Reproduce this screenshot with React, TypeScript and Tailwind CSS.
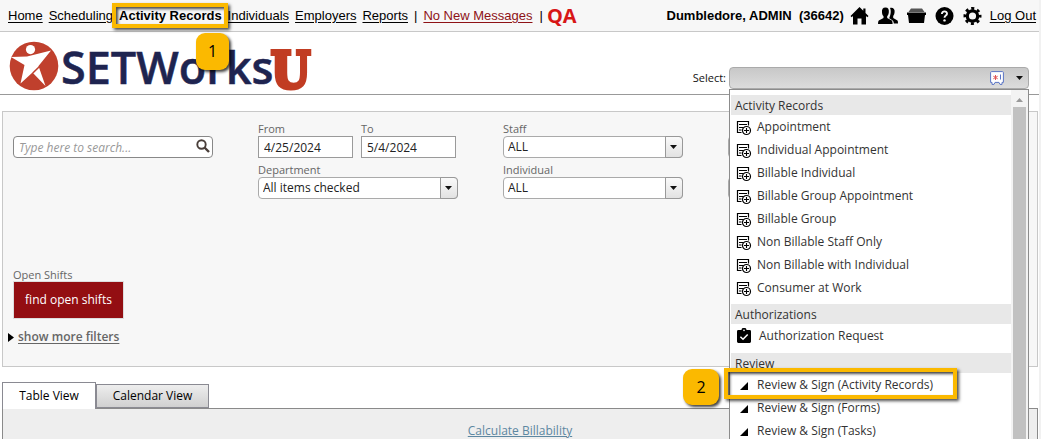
import React from "react";
import { clsx } from "clsx";

type IconKind = "note" | "clipboard" | "corner";

const NAV_BEFORE = ["Home", "Scheduling"];
const NAV_AFTER = ["Individuals", "Employers", "Reports"];

const MENU_GROUPS: { title: string; icon: IconKind; items: string[] }[] = [
  {
    title: "Activity Records",
    icon: "note",
    items: [
      "Appointment",
      "Individual Appointment",
      "Billable Individual",
      "Billable Group Appointment",
      "Billable Group",
      "Non Billable Staff Only",
      "Non Billable with Individual",
      "Consumer at Work",
    ],
  },
  { title: "Authorizations", icon: "clipboard", items: ["Authorization Request"] },
  {
    title: "Review",
    icon: "corner",
    items: ["Review & Sign (Activity Records)", "Review & Sign (Forms)", "Review & Sign (Tasks)"],
  },
];

const MenuIcon = ({ kind }: { kind: IconKind }) => {
  if (kind === "note") {
    return (
      <svg width="16" height="16" viewBox="0 0 16 16" fill="none" stroke="#000" className="mt-0.5 ml-[5px] mr-[5px] shrink-0">
        <path d="M5.5 12.5H1.5V1.5H12.5V5.5" strokeWidth="1.2" />
        <path d="M3 4.5H11M3 7.5H8M3 10H5.5" strokeWidth="1.1" />
        <circle cx="10.5" cy="10.5" r="4" fill="#fff" strokeWidth="1.2" />
        <path d="M8 10.5H13M10.5 8V13" strokeWidth="1.1" />
      </svg>
    );
  }
  if (kind === "clipboard") {
    return (
      <svg width="14" height="16" viewBox="0 0 14 16" className="ml-1.5 mr-2 shrink-0">
        <path d="M1.5 2H4.5A2.5 2.2 0 0 1 9.5 2H12.5A1.4 1.4 0 0 1 14 3.4V13.6A1.4 1.4 0 0 1 12.5 15H1.5A1.4 1.4 0 0 1 0 13.6V3.4A1.4 1.4 0 0 1 1.5 2Z" fill="#000" />
        <circle cx="7" cy="2.4" r=".8" fill="#fff" />
        <path d="M3.4 8.8L6 11.3L10.7 6.4" fill="none" stroke="#fff" strokeWidth="1.5" />
      </svg>
    );
  }
  return (
    <svg width="8" height="8" viewBox="0 0 8 8" className="mt-0.5 ml-[9px] mr-[9px] shrink-0">
      <path d="M8 0V8H0Z" fill="#000" />
    </svg>
  );
};

const Caret = () => (
  <svg width="7" height="4" viewBox="0 0 7 4" className="shrink-0">
    <path d="M0 0H7L3.5 4Z" fill="#111" />
  </svg>
);

const Badge = ({ children, className }: { children: React.ReactNode; className?: string }) => (
  <span
    className={clsx(
      "absolute z-20 flex items-center justify-center rounded-[9px] bg-[#fbb900] font-['Open_Sans',sans-serif] text-base font-normal text-black shadow-[2px_2px_3px_rgba(0,0,0,0.75)]",
      className
    )}
  >
    {children}
  </span>
);

const Highlight = ({ className }: { className?: string }) => (
  <span
    className={clsx(
      "pointer-events-none absolute z-10 border-4 border-[#fbb900] shadow-[2px_2px_3px_rgba(0,0,0,0.7),inset_2px_2px_3px_rgba(0,0,0,0.7)]",
      className
    )}
  />
);

const Logo = () => (
  <svg width="300" height="52" viewBox="0 0 300 52" role="img" aria-label="SETWorksU" className="shrink-0 overflow-visible">
    <circle cx="24" cy="25" r="24.3" fill="#c0402d" />
    <circle cx="20.5" cy="8.6" r="4.6" fill="#fff" />
    <path d="M1 16L17 15.5L41 9.5L28.5 25L35.5 45L22.5 31.5L10.5 42.5L14.5 24Z" fill="#fff" />
    <path d="M22.8 32L29.5 25.5" stroke="#c0402d" strokeWidth="1.6" />
    <text x="51" y="43" fontFamily="Open Sans, sans-serif" fontSize="45" fontWeight="600" fill="#1e2450" stroke="#1e2450" strokeWidth=".5">
      SETWorks
    </text>
    <text x="261" y="47" fontFamily="DejaVu Serif Condensed, DejaVu Serif, serif" fontSize="50" fontWeight="700" fontStretch="condensed" fill="#c13c22" stroke="#c13c22" strokeWidth="4">
      U
    </text>
  </svg>
);

const HeaderIcons = () => (
  <div className="flex items-center gap-[9px]">
    <button aria-label="Dashboard">
      <svg width="19" height="18" viewBox="0 0 18 18"><path d="M9 0L12.8 3.7V1.5H15V5.9L18 9L16.8 10.3L15.5 9V17.5H11V11.5H7V17.5H2.5V9L1.2 10.3L0 9Z" /></svg>
    </button>
    <button aria-label="People">
      <svg width="20" height="18" viewBox="0 0 20 18">
        <path d="M12 1C15 .2 17 2.2 16.6 5C16.5 7 15.8 8.3 15.2 9V11L19.5 13.5Q20 14 20 16.5H15.8C15.6 13.8 15 13.3 11.4 11.5V10.4C12.7 8.2 13.4 3.5 12 1Z" />
        <path d="M7.5.5C10.2.5 11.2 2.5 10.8 5.4C10.5 7.5 9.7 8.6 9.2 9.1V11L13.8 13.5Q14.6 14 14.6 17H0Q0 14 .8 13.5L5.5 11V9.1C4.9 8.6 4.2 7.5 4 5.4C3.6 2.5 4.8.5 7.5.5Z" />
      </svg>
    </button>
    <button aria-label="Files">
      <svg width="19" height="18" viewBox="0 0 19 18">
        <path d="M4 1.5H15L17.5 5H1.5Z" fill="#555" />
        <path d="M0 5.5H19V8H18L17 16H2L1 8H0Z" />
      </svg>
    </button>
    <button aria-label="Help">
      <svg width="19" height="18" viewBox="0 0 19 18">
        <circle cx="9.5" cy="9" r="9" />
        <path d="M6.9 6.9C6.9 3.3 12.2 3.7 12 6.8C11.8 8.7 9.5 8.6 9.5 10.8" fill="none" stroke="#f7f7f7" strokeWidth="1.9" />
        <circle cx="9.5" cy="13.4" r="1.2" fill="#f7f7f7" />
      </svg>
    </button>
    <button aria-label="Settings">
      <svg width="19" height="18" viewBox="0 0 18 18">
        <circle cx="9" cy="9" r="5.2" fill="none" stroke="#000" strokeWidth="3.2" />
        <circle cx="9" cy="9" r="7.6" fill="none" stroke="#000" strokeWidth="2.8" strokeDasharray="3 2.97" strokeDashoffset="1.5" />
      </svg>
    </button>
  </div>
);

const TextField = ({ id, label, value }: { id: string; label: string; value: string }) => (
  <div className="w-[95px]">
    <label htmlFor={id} className="block h-[13px] text-[11px] leading-3 text-[#666]">{label}</label>
    <input id={id} defaultValue={value}
      className="block h-[22px] w-full border border-[#9a9a9a] bg-white px-[5px] text-xs text-[#222]" />
  </div>
);

const SelectField = ({ id, label, value }: { id: string; label?: string; value: string }) => (
  <div>
    <label htmlFor={id} className="block h-[13px] text-[11px] leading-3 text-[#666]">{label}</label>
    <div className="relative">
      <select id={id} aria-label={label ? undefined : id}
        className="block h-[22px] w-full appearance-none rounded-sm border border-[#aaa] bg-white px-1 text-xs text-[#222]">
        {value && <option>{value}</option>}
      </select>
      <span className="pointer-events-none absolute inset-y-0 right-0 flex w-[18px] items-center justify-center rounded-r-sm border border-[#999] bg-linear-to-b from-[#fafafa] to-[#e2e2e2] pr-px">
        <Caret />
      </span>
    </div>
  </div>
);

const TopBar = () => (
  <header className="flex h-8 items-center justify-between border-b border-[#c8c8c8] bg-[#f7f7f7] pl-2 pr-[3px] font-['Liberation_Sans',Arial,sans-serif] text-[13px] text-black">
    <nav className="flex items-center gap-1.5">
      {NAV_BEFORE.map((item) => (
        <a key={item} href="#" className="underline underline-offset-2">{item}</a>
      ))}
      <span className="relative">
        <a href="#" className="font-bold">Activity Records</a>
        <Highlight className="-left-[7px] -right-1.5 -top-1 -bottom-1" />
        <Badge className="left-[77px] top-[26px] h-[37px] w-[33px]">1</Badge>
      </span>
      {NAV_AFTER.map((item) => (
        <a key={item} href="#" className="underline underline-offset-2">{item}</a>
      ))}
      <span>|</span>
      <a href="#" className="text-[13px] text-[#8e1216] underline underline-offset-2">No New Messages</a>
      <span className="flex items-center gap-1 pl-px">
        |
        <span className="font-['Open_Sans',sans-serif] text-xl font-bold text-[#d81616]">QA</span>
      </span>
    </nav>
    <div className="flex items-center gap-2">
      <div className="flex items-center gap-1.5">
        <span className="font-bold whitespace-pre">Dumbledore, ADMIN  (36642)</span>
        <HeaderIcons />
      </div>
      <a href="#" className="underline underline-offset-2">Log Out</a>
    </div>
  </header>
);

const ActionMenu = () => (
  <div className="absolute inset-x-0 top-full z-10 flex h-[400px] border border-[#8c8c8c] bg-white pt-[5px] pl-px">
    <div className="grow">
      {MENU_GROUPS.map((group) => (
        <section key={group.title} className="pb-[5px]">
          <h2 className="h-5 bg-[#e8e8e8] pl-1 leading-[22px]">{group.title}</h2>
          <ul>
            {group.items.map((item, i) => (
              <li key={item} className="relative">
                <button className={clsx("flex w-full items-center text-left", group.icon === "clipboard" ? "h-6" : "h-[23px]")}>
                  <MenuIcon kind={group.icon} />
                  {item}
                </button>
                {group.icon === "corner" && i === 0 && (
                  <>
                    <Highlight className="-left-[7px] -top-[5px] h-[31px] w-[233px]" />
                    <Badge className="-left-12 -top-1 size-9">2</Badge>
                  </>
                )}
              </li>
            ))}
          </ul>
        </section>
      ))}
    </div>
    <div className="-mt-[5px] flex w-[17px] flex-col items-center bg-[#f3f3f3] pt-2">
      <svg width="7" height="4" viewBox="0 0 7 4"><path d="M0 4L3.5 0L7 4Z" fill="#999" /></svg>
      <div className="mt-[5px] w-[13px] grow bg-[#c1c1c1]" />
    </div>
  </div>
);

const ActionSelect = () => (
  <div className="flex items-center gap-[3px] pt-[35px]">
    <label htmlFor="action" className="text-[11px] text-[#111]">Select:</label>
    <div className="relative w-[300px] text-xs text-[#333]">
      <button id="action" aria-haspopup="menu" aria-expanded="true"
        className="flex h-[22px] w-full items-center justify-end gap-3 rounded-sm border border-[#aaa] bg-linear-to-b from-[#c8c8c8] to-[#dcdcdc] pr-[5px]">
        <svg width="14" height="14" viewBox="0 0 14 14">
          <path d="M1.5.6H12.5A1 1 0 0 1 13.4 1.6V11.4H12V13.4H10L9 11.4H5L4 13.4H2V11.4H.6V1.6A1 1 0 0 1 1.5.6Z" fill="#fff" stroke="#5b75c4" />
          <path d="M5.5 4V9M3.3 5.2L7.7 7.8M7.7 5.2L3.3 7.8" stroke="#e05555" />
          <path d="M10.5 3.5V8.5" stroke="#5b75c4" />
        </svg>
        <Caret />
      </button>
      <ActionMenu />
    </div>
  </div>
);

const Filters = () => (
  <section className="mr-px ml-0.5 mt-4 flex h-64 shrink-0 flex-col border border-[#c8c8c8] bg-[#f7f7f7] pl-2.5 pt-[11px]">
    <div className="flex gap-[45px]">
      <div className="relative w-[200px] pt-[13px]">
        <input aria-label="Search" placeholder="Type here to search..."
          className="block h-[22px] w-full rounded-sm border border-[#888] bg-white pl-[5px] pr-6 text-xs placeholder:italic placeholder:text-[#999]" />
        <svg width="14" height="14" viewBox="0 0 14 14" className="absolute right-[3px] top-4">
          <circle cx="5.5" cy="5.5" r="4.2" fill="none" stroke="#4a3f3a" strokeWidth="1.9" />
          <path d="M8.5 8.5L13 13" stroke="#4a3f3a" strokeWidth="2.4" />
        </svg>
      </div>
      <div className="flex w-[200px] flex-col gap-1.5">
        <div className="flex gap-2">
          <TextField id="from" label="From" value="4/25/2024" />
          <TextField id="to" label="To" value="5/4/2024" />
        </div>
        <SelectField id="department" label="Department" value="All items checked" />
      </div>
      <div className="flex w-[180px] flex-col gap-1.5">
        <SelectField id="staff" label="Staff" value="ALL" />
        <SelectField id="individual" label="Individual" value="ALL" />
      </div>
      <div className="flex w-[180px] flex-col gap-1.5">
        <SelectField id="status" value="" />
        <SelectField id="activity" value="" />
      </div>
    </div>
    <div className="mt-[69px] text-[11px] leading-[13px] text-[#666]">Open Shifts</div>
    <button className="h-[38px] w-[111px] border border-[#ddd] bg-[#930e12] text-xs font-medium text-white">find open shifts</button>
    <a href="#" className="-ml-[5px] mt-2.5 flex items-center gap-1 text-xs font-semibold text-[#666]">
      <svg width="6" height="9" viewBox="0 0 6 9"><path d="M0 0L6 4.5L0 9Z" fill="#000" /></svg>
      <span className="underline underline-offset-2">show more filters</span>
    </a>
  </section>
);

export default function App() {
  return (
    <div className="flex h-screen flex-col overflow-hidden border-r-2 border-[#f1f1f1] bg-white font-['Open_Sans','Noto_Sans',sans-serif] text-xs">
      <TopBar />
      <div className="flex h-[63px] shrink-0 items-start justify-between border-b border-[#999] pl-2.5 pr-2.5">
        <div className="pt-[9px]"><Logo /></div>
        <ActionSelect />
      </div>
      <Filters />
      <div className="ml-0.5 mt-[15px] flex shrink-0 items-end" role="tablist">
        <button role="tab" aria-selected="true" className="relative -mb-px h-[27px] w-[94px] border border-b-0 border-[#8a8a92] bg-white text-black">Table View</button>
        <button role="tab" className="h-6 w-[113px] border border-[#8a8a92] bg-linear-to-b from-[#eee] to-[#d0d0d0] text-black">Calendar View</button>
      </div>
      <section className="ml-0.5 mr-px grow border border-b-0 border-[#8a8a8a] bg-[#eee] pt-3.5 text-center">
        <a href="#" className="text-[#5d87a1] underline">Calculate Billability</a>
      </section>
    </div>
  );
}
